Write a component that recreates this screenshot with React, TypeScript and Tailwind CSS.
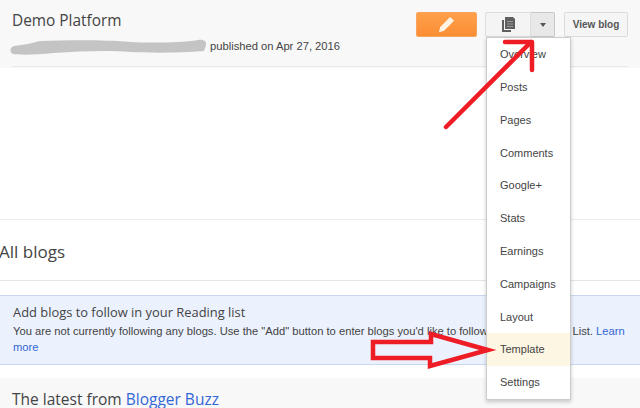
import React from "react";

const menuItems = [
  "Overview",
  "Posts",
  "Pages",
  "Comments",
  "Google+",
  "Stats",
  "Earnings",
  "Campaigns",
  "Layout",
  "Template",
  "Settings",
];

const Header = () => (
  <div className="h-[68px] shrink-0 bg-[#f8f8f8] pl-3 pr-3">
    <div className="flex h-[67px] justify-between border-b border-[#e8e8e8]">
      <div>
        <h1 className="mt-[10px] font-['Open_Sans',sans-serif] text-[15.4px] leading-[22px] text-[#444]">
          Demo Platform
        </h1>
        <p className="mt-[7px] pl-[198px] text-[11.2px] leading-[14px] text-[#444]">
          published on Apr 27, 2016
        </p>
      </div>
      <div className="mt-3 flex h-[25px] items-start">
        <button className="flex h-[25px] w-[61px] items-center justify-center rounded-[2px] border border-[#f9a45c] bg-gradient-to-b from-[#ffa04a] to-[#fb8e35]">
          <svg width="17" height="17" viewBox="0 0 14 14" fill="#fff3e6">
            <path d="M10 0.8 13.2 4 5 12.2 0.8 13.4 1.8 9Z" />
          </svg>
        </button>
        <div className="ml-[8px] flex h-[25px]">
          <button className="flex h-[25px] w-[46px] items-center justify-center rounded-l-[2px] border border-[#dcdcdc] bg-[#f4f4f4]">
            <svg width="15" height="16" viewBox="0 0 15 16" fill="#5f5f5f">
              <path d="M4 0h8l2 2v10H4Z" />
              <path d="M1 3h2v10h7v2H1Z" />
              <path d="M6 4h6v1H6ZM6 6.5h6v1H6ZM6 9h6v1H6Z" fill="#9a9a9a" />
            </svg>
          </button>
          <button className="flex h-[25px] w-[24px] items-center justify-center rounded-r-[2px] border border-l-0 border-[#c8c8c8] bg-[#e8e8e8]">
            <span className="mt-[1px] h-0 w-0 border-x-[3.5px] border-t-[4px] border-x-transparent border-t-[#555]" />
          </button>
        </div>
        <button className="ml-[9px] h-[25px] w-[64px] rounded-[2px] border border-[#dcdcdc] bg-[#f5f5f5] text-[10px] font-bold text-[#555]">
          View blog
        </button>
      </div>
    </div>
  </div>
);

const Dropdown = () => (
  <ul className="absolute left-[486px] top-[37px] w-[85px] border border-[#ccc] bg-white shadow-[0_2px_4px_rgba(0,0,0,0.2)]">
    {menuItems.map((item) => (
      <li
        key={item}
        className={`flex h-[32.8px] items-center pl-[13px] text-[11px] text-[#444] ${
          item === "Template" ? "bg-[#fdf6e3]" : ""
        }`}
      >
        {item}
      </li>
    ))}
  </ul>
);

export default function App() {
  return (
    <div className="relative h-[408px] w-[640px] overflow-hidden bg-white font-['Liberation_Sans',Arial,sans-serif]">
      <div className="flex h-full flex-col">
        <Header />
        <div className="h-[152px] shrink-0 border-b border-[#ebebeb]" />
        <div className="flex h-[61px] shrink-0 items-center border-b border-[#e5e5e5] pt-[4px]">
          <h2 className="-ml-[1px] font-['Open_Sans',sans-serif] text-[17px] text-[#444]">
            All blogs
          </h2>
        </div>
        <div className="mt-[14px] h-[70px] shrink-0 border-y border-[#c9d7f1] bg-[#ebf1fd] pl-[13px] pr-3 pt-[6px]">
          <h3 className="font-['Open_Sans',sans-serif] text-[12.9px] leading-[20px] text-[#444]">
            Add blogs to follow in your Reading list
          </h3>
          <p className="mt-[2px] text-[11.2px] leading-[15.5px] text-[#444]">
            You are not currently following any blogs. Use the "Add" button to enter blogs you'd like to follow in your Reading List.{" "}
            <a className="text-[#3367d6]">Learn more</a>
          </p>
        </div>
        <div className="mt-[13px] flex-1 bg-[#f8f8f8] pl-3 pt-[10px]">
          <h2 className="font-['Open_Sans',sans-serif] text-[15.5px] leading-[22px] text-[#444]">
            The latest from <a className="text-[#3367d6]">Blogger Buzz</a>
          </h2>
        </div>
      </div>

      <Dropdown />

      {/* name blurred out in the original */}
      <svg className="absolute left-0 top-0" width="640" height="68">
        <path
          d="M14 46 C24 45 32 43 40 41 C70 40 110 40 130 42 C150 43 180 43 198 40 C204 39 207 42 206 45 L204 51 C180 53 150 53 130 52 C110 50 80 51 54 53 C35 55 20 55 13 54 C9 52 10 47 14 46 Z"
          fill="#c4c4c4"
        />
      </svg>

      {/* red annotations */}
      <svg className="absolute left-0 top-0" width="640" height="408" fill="none">
        <path
          d="M446 127 L531 42 M505 42 H532 V70"
          stroke="#ee1c25"
          strokeWidth="4.5"
          strokeLinecap="round"
          strokeLinejoin="round"
        />
        <path
          d="M373 342 H431 V334 L488 350 L430 366 V358 H373 Z"
          stroke="#ee1c25"
          strokeWidth="4.5"
          strokeLinejoin="miter"
        />
      </svg>
    </div>
  );
}
